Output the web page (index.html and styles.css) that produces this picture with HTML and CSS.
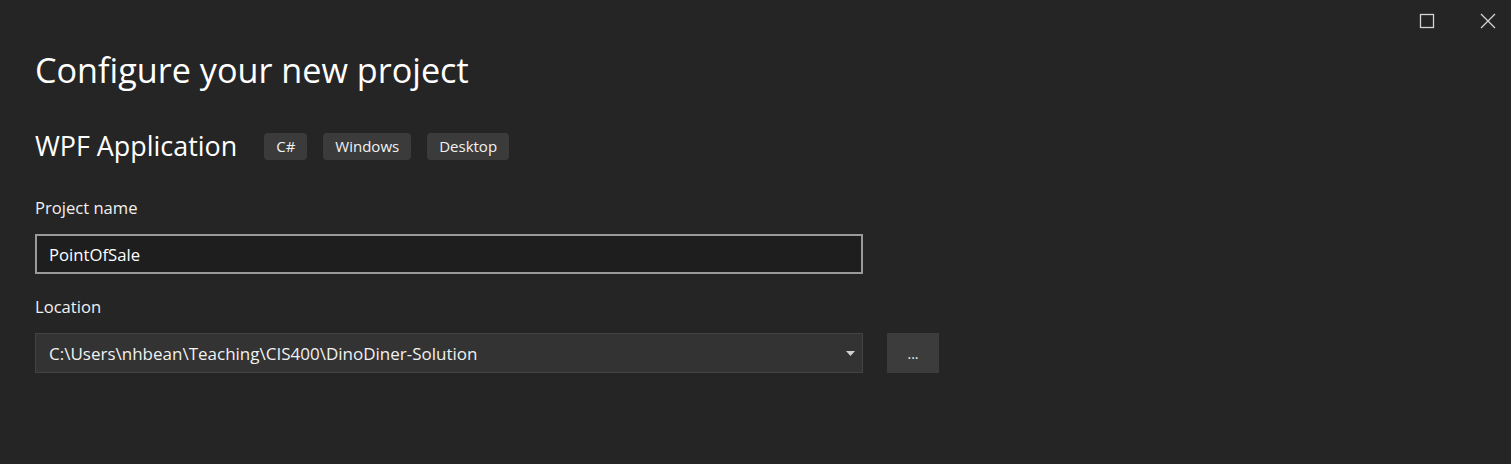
FILE: index.html
```html
<!DOCTYPE html>
<html>
<head>
<meta charset="utf-8">
<link rel="stylesheet" href="styles.css">
</head>
<body>
<div class="window">
  <div class="caption">
    <span class="cap-btn">
      <svg width="16" height="16" viewBox="0 0 16 16"><rect x="1.5" y="1.5" width="13" height="13" fill="none" stroke="#d4d4d4" stroke-width="1.3"/></svg>
    </span>
    <span class="cap-btn">
      <svg width="16" height="16" viewBox="0 0 16 16"><path d="M1 1 L15 15 M15 1 L1 15" stroke="#d4d4d4" stroke-width="1.3"/></svg>
    </span>
  </div>
  <main class="content">
    <h1 class="title">Configure your new project</h1>
    <div class="template-row">
      <h2 class="template">WPF Application</h2>
      <span class="tag">C#</span>
      <span class="tag">Windows</span>
      <span class="tag">Desktop</span>
    </div>
    <label class="label">Project name</label>
    <div class="input">PointOfSale</div>
    <label class="label label-loc">Location</label>
    <div class="loc-row">
      <div class="select">
        <span>C:\Users\nhbean\Teaching\CIS400\DinoDiner-Solution</span>
        <svg class="arrow" width="9" height="5" viewBox="0 0 9 5"><path d="M0 0 H9 L4.5 5 Z" fill="#d0d0d0"/></svg>
      </div>
      <div class="browse">...</div>
    </div>
  </main>
</div>
</body>
</html>
```
FILE: styles.css
```css
html, body {
  margin: 0;
  padding: 0;
  background: #252526;
}
body {
  font-family: "Open Sans", "Noto Sans", sans-serif;
  color: #f1f1f1;
  width: 1511px;
  height: 464px;
  overflow: hidden;
}
.window {
  position: relative;
  height: 464px;
}
.caption {
  position: absolute;
  top: 13px;
  right: 15px;
  display: flex;
  gap: 45px;
}
.cap-btn {
  display: block;
  width: 16px;
  height: 16px;
}
.cap-btn svg { display: block; }
.content {
  padding: 45px 0 0 35px;
}
.title {
  margin: 0;
  font-weight: 400;
  font-size: 34.2px;
  line-height: 50px;
  color: #ffffff;
}
.template-row {
  display: flex;
  align-items: center;
  margin-top: 37px;
  height: 28px;
}
.template {
  margin: 0 27px 0 0;
  font-weight: 400;
  font-size: 26.9px;
  line-height: 28px;
  color: #ffffff;
}
.tag {
  display: inline-flex;
  align-items: center;
  height: 27px;
  padding: 0 12px;
  margin-right: 16px;
  background: #3b3b3b;
  border-radius: 4px;
  font-size: 15px;
  color: #f1f1f1;
}
.label {
  display: block;
  font-size: 16.6px;
  line-height: 22px;
  margin-top: 37px;
  color: #f1f1f1;
}
.label-loc { margin-top: 22px; }
.input {
  box-sizing: border-box;
  margin-top: 15px;
  width: 828px;
  height: 40px;
  border: 2px solid #9a9a9a;
  background: #1e1e1e;
  padding: 0 12px;
  display: flex;
  align-items: center;
  font-size: 16.7px;
  color: #ffffff;
}
.loc-row {
  display: flex;
  margin-top: 15px;
  gap: 24px;
}
.select {
  box-sizing: border-box;
  width: 828px;
  height: 40px;
  border: 1px solid #434343;
  background: #333333;
  padding: 0 7px 0 13px;
  display: flex;
  align-items: center;
  justify-content: space-between;
  font-size: 17px;
  color: #f1f1f1;
}
.arrow { display: block; margin-top: 1px; }
.browse {
  width: 52px;
  height: 40px;
  background: #3c3c3c;
  display: flex;
  align-items: center;
  justify-content: center;
  font-size: 14px;
  color: #f1f1f1;
}
```
